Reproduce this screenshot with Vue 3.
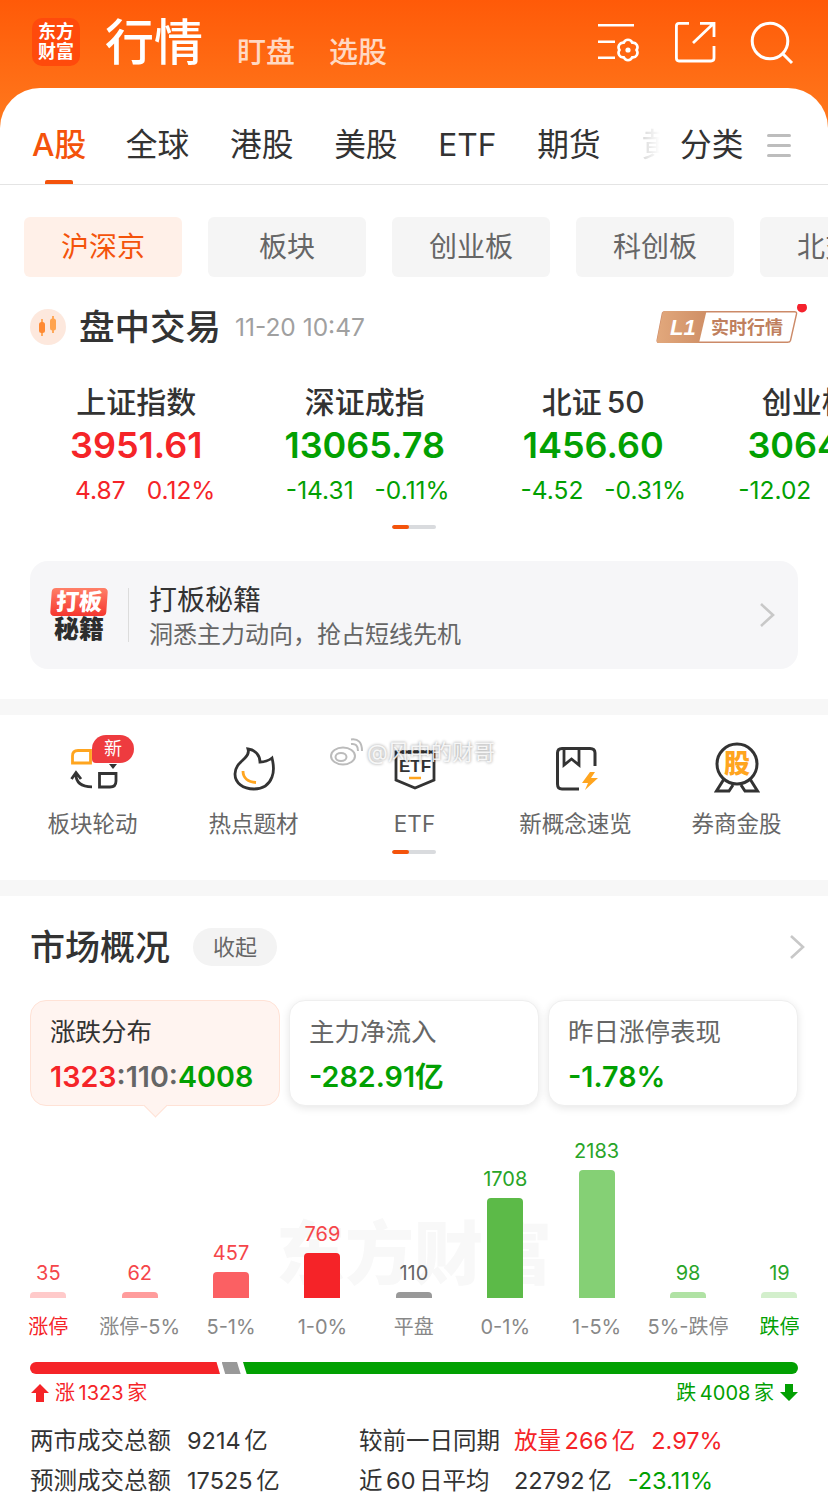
<script setup>
const tabs = ['全球', '港股', '美股', 'ETF', '期货']
const chips = ['沪深京', '板块', '创业板', '科创板', '北交所']

const indexes = [
  { name: '上证指数', value: '3951.61', diff: '4.87', pct: '0.12%', up: true, shift: 18 },
  { name: '深证成指', value: '13065.78', diff: '-14.31', pct: '-0.11%', up: false, shift: 6 },
  { name: '北证 50', value: '1456.60', diff: '-4.52', pct: '-0.31%', up: false, shift: 20 },
  { name: '创业板指', value: '3064.85', diff: '-12.02', pct: '-0.39%', up: false, shift: 14 }
]

const entries = [
  { key: 'rotate', label: '板块轮动' },
  { key: 'fire', label: '热点题材' },
  { key: 'etf', label: 'ETF' },
  { key: 'book', label: '新概念速览' },
  { key: 'medal', label: '券商金股' }
]

const cards = [
  { title: '涨跌分布', active: true },
  { title: '主力净流入', value: '-282.91亿' },
  { title: '昨日涨停表现', value: '-1.78%' }
]

const bars = [
  { count: 35, label: '涨停', height: 6, color: '#ffcaca', text: '#f5464a', labelColor: '#f52428' },
  { count: 62, label: '涨停-5%', height: 6, color: '#ff9c9c', text: '#f5464a' },
  { count: 457, label: '5-1%', height: 26, color: '#fb6063', text: '#f5464a' },
  { count: 769, label: '1-0%', height: 45, color: '#f52328', text: '#f5464a' },
  { count: 110, label: '平盘', height: 6, color: '#999999', text: '#666666' },
  { count: 1708, label: '0-1%', height: 100, color: '#5cba48', text: '#28a428' },
  { count: 2183, label: '1-5%', height: 128, color: '#85d075', text: '#28a428' },
  { count: 98, label: '5%-跌停', height: 6, color: '#b0e2a4', text: '#28a428' },
  { count: 19, label: '跌停', height: 6, color: '#d3efcc', text: '#28a428', labelColor: '#02a002' }
]
</script>

<template>
  <div class="page">
    <header class="top">
      <div class="logo"><span>东方</span><span>财富</span></div>
      <div class="top-title">行情</div>
      <div class="top-link">盯盘</div>
      <div class="top-link">选股</div>
      <div class="top-icons">
        <svg class="icon-list" width="44" height="44" viewBox="0 0 44 44" fill="none" stroke="#fff" stroke-width="2.6">
          <path d="M1 4.300H37M1 20.700H18M1 36.700H18" />
          <path d="M39.500 29A4.600 4.600 0 0 1 35.250 36.360A4.600 4.600 0 0 1 26.750 36.360A4.600 4.600 0 0 1 22.500 29A4.600 4.600 0 0 1 26.750 21.640A4.600 4.600 0 0 1 35.250 21.640A4.600 4.600 0 0 1 39.500 29Z" />
          <circle cx="31" cy="29" r="2.600" fill="#fff" stroke="none" />
        </svg>
        <svg width="42" height="42" viewBox="0 0 42 42" fill="none" stroke="#fff" stroke-width="2.800">
          <path d="M15 2.400H5Q2.400 2.400 2.400 5V37Q2.400 40 5 40H37Q40 40 40 37V25" />
          <path d="M19 22L39 3M26 2.400H40V16" />
        </svg>
        <svg width="44" height="44" viewBox="0 0 44 44" fill="none" stroke="#fff" stroke-width="3">
          <circle cx="20" cy="20" r="17.800" />
          <path d="M33 33L42 42" />
        </svg>
      </div>
    </header>

    <main class="sheet">
      <nav class="tabs">
        <div class="tab-list">
          <span class="tab active">A股</span>
          <span v-for="tab in tabs" :key="tab" class="tab">{{ tab }}</span>
          <span class="tab faded">黄金</span>
        </div>
        <span class="tab tab-more">分类</span>
        <div class="tab-menu"><i></i><i></i><i></i></div>
      </nav>

      <div class="chips">
        <span v-for="(chip, i) in chips" :key="chip" class="chip" :class="{ active: i === 0 }">{{ chip }}</span>
      </div>

      <div class="trade-row">
        <svg class="trade-icon" width="36" height="36" viewBox="0 0 36 36">
          <circle cx="18" cy="18" r="18" fill="#fde8dd" />
          <path d="M12 10v17M23 7v17" stroke="#ff9a3d" stroke-width="1.600" />
          <rect x="9" y="13" width="6" height="11" rx="2.500" fill="#ff8a33" />
          <rect x="20" y="9.500" width="6" height="12" rx="2.500" fill="#ffa34d" />
        </svg>
        <span class="trade-title">盘中交易</span>
        <span class="trade-time">11-20 10:47</span>
        <svg class="l1-badge" width="152" height="42" viewBox="0 0 152 42">
          <defs>
            <linearGradient id="l1Fill" x1="0" x2="1" y1="0" y2="0">
              <stop offset="0" stop-color="#e2a87c" />
              <stop offset="1" stop-color="#cf8f66" />
            </linearGradient>
          </defs>
          <path d="M6.500 9Q7 7.700 9 7.700H138.500Q141 7.700 140.500 10L134.500 36.500Q134 38.300 131.500 38.300H3Q.8 38.300 1.200 36Z" fill="#fff" stroke="#cc8a68" stroke-width="1.400" />
          <path d="M6.500 9Q7 7 9 7H50.500L43 39H3Q.5 39 1 36Z" fill="url(#l1Fill)" />
          <text x="14" y="31" class="l1-text">L1</text>
          <text x="55" y="30" class="l1-label">实时行情</text>
          <circle cx="146" cy="3.500" r="5" fill="#f5222d" />
        </svg>
      </div>

      <div class="index-row">
        <div v-for="item in indexes" :key="item.name" class="index-col" :class="item.up ? 'up' : 'down'">
          <div class="index-name">{{ item.name }}</div>
          <div class="index-value">{{ item.value }}</div>
          <div class="index-change" :style="{ paddingLeft: item.shift + 'px' }">
            <span>{{ item.diff }}</span>
            <span>{{ item.pct }}</span>
          </div>
        </div>
      </div>
      <div class="pager"><i></i></div>

      <section class="banner">
        <div class="banner-logo">
          <span class="banner-tag">打板</span>
          <span class="banner-secret">秘籍</span>
        </div>
        <div class="banner-text">
          <div class="banner-title">打板秘籍</div>
          <div class="banner-sub">洞悉主力动向，抢占短线先机</div>
        </div>
        <svg class="chevron" width="16" height="26" viewBox="0 0 16 26" fill="none" stroke="#c8c8c8" stroke-width="2.600">
          <path d="M2 2L14 13L2 24" />
        </svg>
      </section>

      <div class="gap-band first-band"></div>

      <section class="entries">
        <div class="entry-grid">
          <div v-for="entry in entries" :key="entry.key" class="entry">
            <svg class="entry-icon" width="72" height="60" viewBox="0 0 72 60" fill="none" stroke="#333" stroke-width="2.800">
              <template v-if="entry.key === 'rotate'">
                <path d="M15.500 25V18Q15.500 12.500 21 12.500H33.500V25Z" stroke="#ffa51f" />
                <path d="M52 26H60L56 31Z" fill="#333" stroke="none" />
                <path d="M18.800 36Q19 48.800 35 48.800M14.500 41L19 34.500L24 41" />
                <path d="M42.500 35.500H59V43Q59 49 53 49H42.500Z" />
              </template>
              <template v-else-if="entry.key === 'fire'">
                <path d="M30 11C38 12 42 18 42 24C46 24 50 23 54 20C56 28 56 34 54 39C51 47 44 51 36 51C25 51 17 45 17 36C17 28 23 24 27 20C30 17 31 14 30 11Z" />
                <path d="M25 33C25 40 30 44 38 44.500" stroke="#ffa51f" />
              </template>
              <template v-else-if="entry.key === 'etf'">
                <path d="M17 14H55V42L36 50L17 42Z" />
                <path d="M17 14H55" stroke-dasharray="4 2" stroke-width="3.500" />
                <text x="36" y="34" text-anchor="middle" class="etf-text">ETF</text>
                <path d="M30 40H42" stroke="#ffa51f" stroke-width="2.500" />
              </template>
              <template v-else-if="entry.key === 'book'">
                <path d="M55 28V15Q55 10.500 50 10.500H22Q17.500 10.500 17.500 15V46Q17.500 51 22 51H39" stroke-width="3" />
                <path d="M24 11V27L31.500 21L39 27V11" />
                <path d="M50 34L42 45H48L45 52L58 40H51L55 34Z" fill="#ffa51f" stroke="none" />
              </template>
              <template v-else>
                <circle cx="36" cy="26" r="20" stroke-width="3" />
                <path d="M23 41L15.500 53H28L32 47M49 41L56.500 53H44L40 47" stroke-width="3" />
                <text x="36" y="35" text-anchor="middle" class="medal-text">股</text>
              </template>
            </svg>
            <span v-if="entry.key === 'rotate'" class="new-badge">新</span>
            <span class="entry-label">{{ entry.label }}</span>
          </div>
        </div>
        <div class="pager entry-pager"><i></i></div>
        <div class="weibo-mark">
          <svg width="34" height="28" viewBox="0 0 34 28" fill="none" stroke="#bbb" stroke-width="2">
            <ellipse cx="14" cy="18" rx="12" ry="8.500" fill="#fff" />
            <ellipse cx="12" cy="19" rx="5.500" ry="4" />
            <path d="M22 6Q29 5 29 13M22 1.500Q33 0 33 13" />
          </svg>
          <span>@风中的财哥</span>
        </div>
      </section>

      <div class="gap-band"></div>

      <section class="market">
        <div class="market-head">
          <span class="market-title">市场概况</span>
          <span class="market-toggle">收起</span>
          <svg class="chevron" width="16" height="26" viewBox="0 0 16 26" fill="none" stroke="#c8c8c8" stroke-width="2.600">
            <path d="M2 2L14 13L2 24" />
          </svg>
        </div>

        <div class="cards">
          <div v-for="card in cards" :key="card.title" class="card" :class="{ active: card.active }">
            <div class="card-title">{{ card.title }}</div>
            <div v-if="card.active" class="card-value">
              <span class="red">1323</span><span class="gray">:110:</span><span class="green">4008</span>
            </div>
            <div v-else class="card-value green">{{ card.value }}</div>
          </div>
        </div>

        <div class="chart">
          <div class="chart-mark">东方财富</div>
          <div v-for="bar in bars" :key="bar.label" class="bar-col">
            <span class="bar-count" :style="{ color: bar.text }">{{ bar.count }}</span>
            <div class="bar" :style="{ height: bar.height + 'px', background: bar.color }"></div>
            <span class="bar-label" :style="{ color: bar.labelColor || '#888888' }">{{ bar.label }}</span>
          </div>
        </div>

        <div class="ratio">
          <div class="ratio-up"></div>
          <div class="ratio-flat"></div>
          <div class="ratio-down"></div>
        </div>
        <div class="ratio-labels">
          <span class="ratio-label red">
            <svg width="18" height="18" viewBox="0 0 18 18" fill="#f52428"><path d="M9 0L18 9H13V18H5V9H0Z" /></svg>
            涨 1323 家
          </span>
          <span class="ratio-label green">
            跌 4008 家
            <svg width="18" height="18" viewBox="0 0 18 18" fill="#02a002"><path d="M9 17L18 8H13V0H5V8H0Z" /></svg>
          </span>
        </div>

        <div class="stats">
          <span>两市成交总额</span>
          <span>9214 亿</span>
          <span>较前一日同期</span>
          <span class="stat-pair red"><b>放量 266 亿</b><b>2.97%</b></span>
          <span>预测成交总额</span>
          <span>17525 亿</span>
          <span>近 60 日平均</span>
          <span class="stat-pair"><b>22792 亿</b><b class="green">-23.11%</b></span>
        </div>
      </section>
    </main>
  </div>
</template>

<style>
html,
body {
  margin: 0;
  background: #fff;
}
</style>

<style scoped>
.page {
  width: 828px;
  height: 1502px;
  overflow: hidden;
  background: #fff;
  font-family: "Inter", "Noto Sans CJK SC", sans-serif;
  color: #333;
}

.top {
  height: 130px;
  box-sizing: border-box;
  padding: 18px 34px 0 32px;
  display: flex;
  align-items: flex-start;
  background: linear-gradient(180deg, #ff5a08 0%, #ff7a1e 100%);
  color: #fff;
}

.logo {
  width: 48px;
  height: 48px;
  border-radius: 10px;
  background: #ff4a0c;
  display: flex;
  flex-direction: column;
  align-items: center;
  justify-content: center;
  font-size: 18px;
  line-height: 20px;
  font-weight: 700;
}

.top-title {
  margin-left: 25px;
  margin-top: 0;
  font-size: 49px;
  line-height: 50px;
  font-weight: 500;
}

.top-link {
  margin-left: 34px;
  margin-top: 16px;
  font-size: 29px;
  line-height: 38px;
  font-weight: 500;
  color: rgba(255, 255, 255, 0.76);
}

.top-icons {
  margin-left: auto;
  margin-top: 3px;
  display: flex;
  align-items: flex-start;
  gap: 34px;
}

.icon-list {
  margin-right: -1px;
}

.sheet {
  margin-top: -42px;
  position: relative;
  background: #fff;
  border-radius: 40px 40px 0 0;
}

.tabs {
  height: 96px;
  padding-left: 32px;
  display: flex;
  align-items: flex-end;
  border-bottom: 1px solid #e4e4e4;
}

.tab-list {
  width: 628px;
  flex: none;
  display: flex;
  gap: 40.800px;
  overflow: hidden;
  position: relative;
}

.tab {
  flex: none;
  position: relative;
  padding-top: 18px;
  font-size: 31.700px;
  line-height: 78px;
  color: #333;
}

.tab.active {
  color: #f4530b;
  font-weight: 500;
  width: 53px;
  white-space: nowrap;
}

.tab.active::after {
  content: "";
  position: absolute;
  left: 13px;
  bottom: 0;
  width: 28px;
  height: 4px;
  background: #f4530b;
  border-radius: 2px 2px 0 0;
}

.tab.faded {
  color: #d8d8d8;
  -webkit-mask-image: linear-gradient(90deg, #000 0, transparent 18px);
  mask-image: linear-gradient(90deg, #000 0, transparent 18px);
}

.tab-more {
  margin-left: 20px;
}

.tab-menu {
  margin-left: 24px;
  margin-bottom: 27px;
  width: 24px;
  display: flex;
  flex-direction: column;
  gap: 7px;
}

.tab-menu i {
  height: 3px;
  background: #bdbdbd;
  border-radius: 2px;
}

.chips {
  margin-top: 32px;
  padding-left: 24px;
  display: flex;
  gap: 26px;
  overflow: hidden;
}

.chip {
  flex: none;
  width: 158px;
  height: 60px;
  border-radius: 6px;
  background: #f5f5f5;
  color: #666;
  font-size: 28px;
  line-height: 60px;
  text-align: center;
}

.chip.active {
  background: #fff0e8;
  color: #f4530b;
}

.trade-row {
  margin-top: 26px;
  height: 48px;
  padding-left: 30px;
  display: flex;
  align-items: center;
  position: relative;
}

.trade-title {
  margin-left: 13px;
  padding-top: 1px;
  font-size: 35.500px;
  line-height: 48px;
  font-weight: 500;
}

.trade-time {
  margin-left: 14px;
  font-size: 24.500px;
  color: #a0a0a0;
}

.l1-badge {
  position: absolute;
  left: 656px;
  top: 1px;
}

.l1-text {
  font: italic 700 22px "Liberation Sans", sans-serif;
  fill: #fff;
}

.l1-label {
  font: 700 18px "Noto Sans CJK SC", sans-serif;
  fill: #c07f5e;
}

.index-row {
  margin-top: 31px;
  padding-left: 22px;
  display: flex;
  overflow: hidden;
}

.index-col {
  flex: none;
  width: 228.500px;
  text-align: center;
}

.index-name {
  font-size: 30px;
  line-height: 40px;
  font-weight: 500;
  word-spacing: -3px;
}

.index-value {
  font-size: 36px;
  line-height: 46px;
  font-weight: 600;
}

.index-change {
  margin-top: 6px;
  font-size: 24.500px;
  line-height: 32px;
  display: flex;
  justify-content: center;
  gap: 21px;
  white-space: nowrap;
}

.up .index-value,
.up .index-change {
  color: #f52428;
}

.down .index-value,
.down .index-change {
  color: #02a002;
}

.pager {
  width: 44px;
  height: 4px;
  margin: 19px auto 0;
  border-radius: 2px;
  background: #d9dbde;
  overflow: hidden;
}

.pager i {
  display: block;
  width: 17px;
  height: 4px;
  background: #f4530b;
  border-radius: 2px;
}

.banner {
  margin: 32px 30px 0;
  height: 108px;
  border-radius: 18px;
  background: #f6f6f8;
  display: flex;
  align-items: center;
  position: relative;
}

.banner-logo {
  margin-left: 21px;
  width: 78px;
  height: 54px;
  box-sizing: border-box;
  padding-right: 21px;
  display: flex;
  flex-direction: column;
  align-items: center;
  border-right: 1px solid #dcdcdc;
}

.banner-tag {
  width: 56px;
  height: 28px;
  flex: none;
  border-radius: 4px;
  background: linear-gradient(180deg, #ff8068, #f5362e);
  color: #fff;
  font-size: 23px;
  line-height: 28px;
  font-weight: 900;
  text-align: center;
  transform: skewX(-4deg);
}

.banner-secret {
  font-size: 25px;
  line-height: 27px;
  font-weight: 900;
  color: #2d2d2d;
}

.banner-text {
  margin-left: 20px;
  padding-top: 3px;
}

.banner-title {
  font-size: 28px;
  line-height: 36px;
}

.banner-sub {
  font-size: 24px;
  line-height: 34px;
  color: #666;
}

.banner .chevron {
  position: absolute;
  right: 23px;
  top: 41px;
}

.gap-band {
  height: 16px;
  background: #f7f7f7;
}

.first-band {
  margin-top: 30px;
}

.entries {
  position: relative;
  height: 165px;
}

.entry-grid {
  padding: 23px 0 0 12px;
  display: flex;
}

.entry {
  flex: none;
  width: 161px;
  display: flex;
  flex-direction: column;
  align-items: center;
  position: relative;
}

.entry-label {
  margin-top: 10px;
  font-size: 22.500px;
  line-height: 32px;
  color: #666;
}

.new-badge {
  position: absolute;
  left: 80px;
  top: -3px;
  width: 42px;
  height: 28px;
  border-radius: 14px 14px 14px 4px;
  background: #ee3b3f;
  color: #fff;
  font-size: 18px;
  line-height: 28px;
  text-align: center;
}

.etf-text {
  font: 700 17px "Liberation Sans", sans-serif;
  fill: #333;
  stroke: none;
}

.medal-text {
  font: 900 26px "Noto Sans CJK SC", sans-serif;
  fill: #ffa51f;
  stroke: none;
}

.entry-pager {
  margin-top: 10px;
}

.weibo-mark {
  position: absolute;
  left: 329px;
  top: 22px;
  display: flex;
  align-items: center;
  gap: 4px;
  font-size: 21.500px;
  line-height: 30px;
  color: rgba(255, 255, 255, 0.85);
  text-shadow: 0 0 3px rgba(0, 0, 0, 0.45);
}

.market {
  padding-top: 31px;
}

.market-head {
  height: 40px;
  padding-left: 30px;
  display: flex;
  align-items: center;
  position: relative;
}

.market-title {
  font-size: 35px;
  line-height: 40px;
  font-weight: 500;
}

.market-toggle {
  margin-left: 23px;
  width: 84px;
  height: 38px;
  border-radius: 19px;
  background: #f3f3f3;
  color: #666;
  font-size: 22px;
  line-height: 38px;
  text-align: center;
}

.market-head .chevron {
  position: absolute;
  left: 789px;
  top: 7px;
}

.cards {
  margin-top: 33px;
  padding: 0 30px;
  display: flex;
  gap: 9px;
}

.card {
  flex: none;
  width: 250px;
  height: 106px;
  box-sizing: border-box;
  padding: 15px 0 0 19px;
  border-radius: 16px;
  border: 1px solid #efefef;
  background: #fff;
  box-shadow: 0 2px 8px rgba(0, 0, 0, 0.1);
  position: relative;
}

.card.active {
  background: #fff4f0;
  border-color: #ffe2d6;
  box-shadow: none;
}

.card.active::after {
  content: "";
  position: absolute;
  left: 116px;
  bottom: -9px;
  width: 16px;
  height: 16px;
  background: #fff4f0;
  border-right: 1px solid #ffe2d6;
  border-bottom: 1px solid #ffe2d6;
  transform: rotate(45deg);
}

.card-title {
  font-size: 25.500px;
  line-height: 32px;
  color: #666;
}

.card.active .card-title {
  color: #333;
}

.card-value {
  margin-top: 11px;
  font-size: 28.700px;
  line-height: 36px;
  font-weight: 600;
}

.red {
  color: #f52428;
}

.gray {
  color: #666;
}

.green {
  color: #02a002;
}

.chart {
  margin-top: 12px;
  height: 223px;
  padding-left: 2.600px;
  display: flex;
  align-items: flex-end;
  position: relative;
}

.chart-mark {
  position: absolute;
  left: 276px;
  top: 96px;
  font-size: 69px;
  line-height: 80px;
  font-weight: 900;
  color: #f8f8f8;
  white-space: nowrap;
}

.bar-col {
  flex: none;
  width: 91.400px;
  display: flex;
  flex-direction: column;
  align-items: center;
  position: relative;
}

.bar-count {
  font-size: 20px;
  line-height: 24px;
  margin-bottom: 7px;
}

.bar {
  width: 36px;
  border-radius: 4px 4px 0 0;
}

.bar-label {
  margin-top: 15px;
  font-size: 20px;
  line-height: 28px;
  white-space: nowrap;
}

.ratio {
  margin: 21px 0 0 30px;
  display: flex;
  height: 12px;
}

.ratio-up {
  width: 190px;
  background: #f52428;
  border-radius: 6px 0 0 6px;
  clip-path: polygon(0 0, 186.500px 0, 100% 100%, 0 100%);
}

.ratio-flat {
  margin-left: 1.700px;
  width: 19px;
  background: #999;
  clip-path: polygon(0 0, 15.300px 0, 100% 100%, 3.500px 100%);
}

.ratio-down {
  margin-left: 2.300px;
  width: 555px;
  background: #02a002;
  border-radius: 0 6px 6px 0;
  clip-path: polygon(0 0, 100% 0, 100% 100%, 3.700px 100%);
}

.ratio-labels {
  margin-top: 5px;
  padding: 0 30px 0 31px;
  display: flex;
  justify-content: space-between;
  font-size: 20px;
  line-height: 28px;
}

.ratio-label {
  display: flex;
  align-items: center;
  gap: 6px;
  word-spacing: -2px;
}

.stats {
  margin-top: 12px;
  padding-left: 30px;
  display: grid;
  grid-template-columns: 157px 172px 155px auto;
  grid-auto-rows: 40px;
  align-items: center;
  font-size: 23.500px;
  word-spacing: -3px;
}

.stat-pair {
  display: flex;
  align-items: baseline;
  gap: 16px;
}

.stat-pair b {
  font-weight: 400;
}
</style>
